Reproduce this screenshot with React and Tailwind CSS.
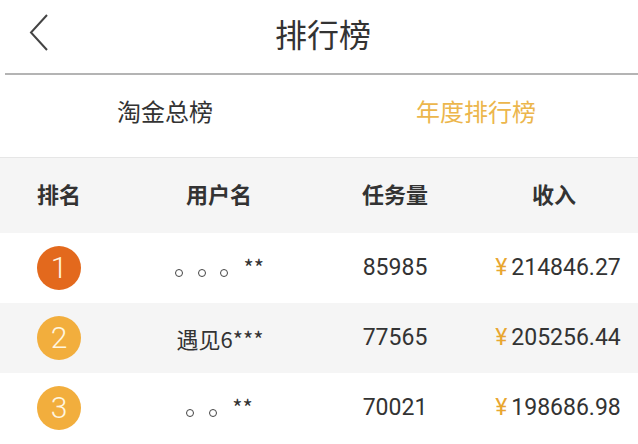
import React from "react";

const font = { fontFamily: '"Noto Sans CJK SC", sans-serif' };

function Dots({ n, stars }) {
  return (
    <div className="flex justify-center items-center pr-[6px]">
      {Array.from({ length: n }).map((_, i) => (
        <span key={i} className="w-[22.5px] flex justify-center pt-[10px]">
          <span className="w-[8px] h-[8px] rounded-full border-[1.5px] border-[#444]" />
        </span>
      ))}
      <span className="self-start -mt-[4px] ml-[8px] leading-none">{stars}</span>
    </div>
  );
}

const rows = [
  { rank: 1, name: <Dots n={3} stars="**" />, tasks: "85985", income: "214846.27", bg: "bg-white", badge: "bg-[#e3691d]" },
  { rank: 2, name: <div className="pl-[2px]">遇见6***</div>, tasks: "77565", income: "205256.44", bg: "bg-[#f5f5f5]", badge: "bg-[#f2ae3d]" },
  { rank: 3, name: <Dots n={2} stars="**" />, tasks: "70021", income: "198686.98", bg: "bg-white", badge: "bg-[#f2ae3d]" },
];

const num = { fontFamily: 'Roboto, "Noto Sans CJK SC", sans-serif' };

export default function App() {
  return (
    <div className="w-[638px] h-[444px] bg-white overflow-hidden text-[#333]" style={font}>
      {/* nav bar */}
      <div className="relative h-[73px] flex items-center justify-center">
        <svg className="absolute left-[28px] top-[13px]" width="24" height="38" viewBox="0 0 24 38">
          <polyline points="19,2 3,19.5 19,37" fill="none" stroke="#444" strokeWidth="2" />
        </svg>
        <span className="text-[32px] leading-none pl-[8px] pb-[8px]">排行榜</span>
      </div>
      <div className="ml-[5px] h-[2px] bg-[#b4b4b4]" />
      {/* tabs */}
      <div className="h-[83px] flex items-start pt-[18px] border-b border-[#e6e6e6]">
        <div className="w-[328px] text-center text-[24px] pl-[2px] text-[#333]">淘金总榜</div>
        <div className="flex-1 text-center text-[24px] pr-[14px] text-[#ecb64c]">年度排行榜</div>
      </div>
      {/* table header */}
      <div className="grid grid-cols-[118px_202px_150px_1fr] h-[75px] items-center bg-[#f5f5f5] font-bold text-[22px] text-[#333] text-center">
        <div className="pb-[4px]">排名</div>
        <div className="pb-[4px]">用户名</div>
        <div className="pb-[4px]">任务量</div>
        <div className="pb-[4px]">收入</div>
      </div>
      {rows.map((r) => (
        <div
          key={r.rank}
          className={`grid grid-cols-[118px_202px_150px_1fr] h-[70px] items-center text-center text-[22px] text-[#333] ${r.bg}`}
        >
          <div className="flex justify-center">
            <div
              className={`w-[44px] h-[44px] rounded-full ${r.badge} flex items-center justify-center text-[#fff6e0] text-[30px] font-light leading-none`}
              style={{ fontFamily: "Roboto, sans-serif" }}
            >
              {r.rank}
            </div>
          </div>
          {r.name}
          <div className="text-[23px]" style={num}>
            {r.tasks}
          </div>
          <div className="text-[23px] flex items-center justify-center pl-[8px]" style={num}>
            <span className="text-[#e8a630] text-[23px] mr-[4px]">¥</span>
            <span>{r.income}</span>
          </div>
        </div>
      ))}
    </div>
  );
}
